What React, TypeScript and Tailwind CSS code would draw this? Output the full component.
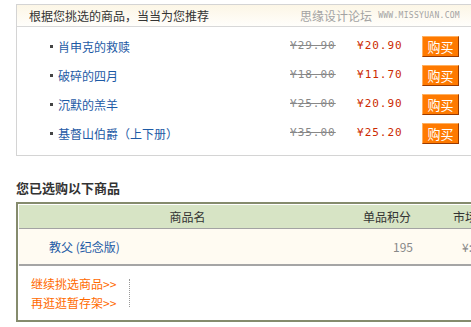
import React from 'react'

interface Recommend {
  name: string
  oldPrice: string
  price: string
}

const RECOMMENDS: Recommend[] = [
  { name: '肖申克的救赎', oldPrice: '29.90', price: '20.90' },
  { name: '破碎的四月', oldPrice: '18.00', price: '11.70' },
  { name: '沉默的羔羊', oldPrice: '25.00', price: '20.90' },
  { name: '基督山伯爵（上下册）', oldPrice: '35.00', price: '25.20' },
]

const FONT = { fontFamily: '"Noto Sans CJK SC", "DejaVu Sans", sans-serif' }
const MONO = { fontFamily: '"DejaVu Sans Mono", monospace', fontSize: '11px' }

function BuyButton() {
  return (
    <button className="w-[37px] h-[21px] bg-[#ff7a00] border border-t-[#ffb060] border-l-[#ffb060] border-r-[#9a3a00] border-b-[#9a3a00] text-white text-[13px] leading-[19px] text-center">
      购买
    </button>
  )
}

export default function App() {
  return (
    <div className="w-[471px] h-[327px] overflow-hidden bg-white text-[12px]" style={FONT}>
      {/* recommendations */}
      <div className="ml-4 mt-1 w-[480px] border border-[#d4d4d4]">
        <div className="h-[22px] flex items-center justify-between pl-3 pr-[35px] bg-gradient-to-b from-[#fcf6e6] to-[#fffefb] border-b border-[#d8d8d8]">
          <span className="text-[#333] text-[12px]">根据您挑选的商品，当当为您推荐</span>
          <span className="flex items-center gap-[6px] text-[#a3a3a3]">
            <span className="text-[12px]">思缘设计论坛</span>
            <span className="text-[8px] tracking-[0.3px]" style={{ fontFamily: '"DejaVu Sans Mono", monospace' }}>WWW.MISSYUAN.COM</span>
          </span>
        </div>
        <ul className="pt-[5px] pb-[7px]">
          {RECOMMENDS.map(r => (
            <li key={r.name} className="h-[29px] flex items-center pl-[33px]">
              <span className="w-[3px] h-[3px] bg-[#444] mr-[5px]" />
              <span className="w-[232px] text-[#1d5aa5]">{r.name}</span>
              <span className="w-[67px] text-[#888] line-through tracking-[1px]" style={MONO}>
                ¥{r.oldPrice}
              </span>
              <span className="w-[65px] text-[#cc2a00] tracking-[1px]" style={MONO}>
                ¥{r.price}
              </span>
              <BuyButton />
            </li>
          ))}
        </ul>
      </div>

      {/* selected items */}
      <div className="mt-6 ml-4 mb-[6px] leading-[16px] text-[13px] font-bold text-[#333]">您已选购以下商品</div>
      <div className="ml-4 w-[480px] border-2 border-[#858b6d] p-px bg-white">
        <div className="h-[24px] flex items-center bg-[#d7e4c5] border-b border-[#a3a3a3] text-[#333]">
          <span className="w-[337px] text-center">商品名</span>
          <span className="w-[55px] text-right">单品积分</span>
          <span className="ml-[42px]">市场价</span>
        </div>
        <div className="h-[37px] flex items-center bg-[#fffbf2] border-b-2 border-[#a5a5a5]">
          <span className="w-[374px] pl-[30px] text-[#1d5aa5]">教父 (纪念版)</span>
          <span className="w-[18px] text-right text-[#888]">195</span>
          <span className="ml-[51px] text-[#888]">¥:</span>
        </div>
        <div className="flex items-center pt-[8px] pb-[7px] pl-[12px]">
          <div className="flex flex-col leading-[19px] text-[#ff6a00]">
            <a>继续挑选商品&gt;&gt;</a>
            <a>再逛逛暂存架&gt;&gt;</a>
          </div>
          <div className="ml-[13px] h-[28px] border-l border-dotted border-[#999]" />
        </div>
      </div>
    </div>
  )
}
